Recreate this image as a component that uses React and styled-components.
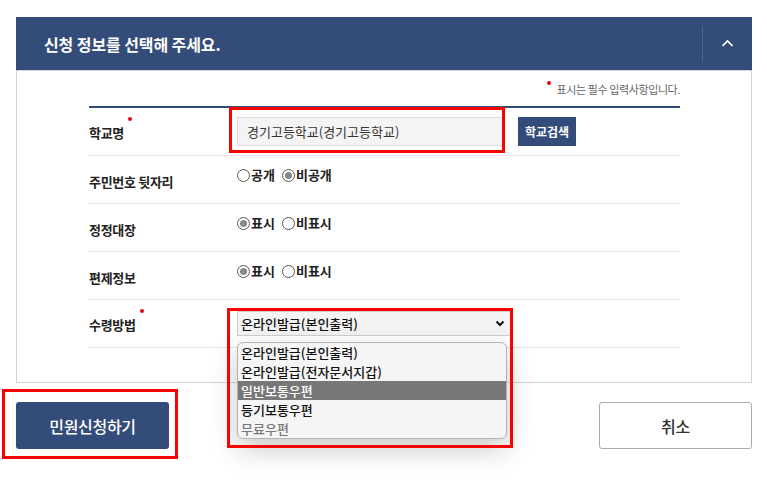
import React from 'react'
import styled, { createGlobalStyle } from 'styled-components'

const navy = '#344c7a'

const GlobalStyle = createGlobalStyle`
  body {
    margin: 0;
    background: #fff;
    font-family: "Noto Sans CJK KR", "Noto Sans", sans-serif;
    color: #222;
  }
`

const Page = styled.div`
  width: 736px;
  min-height: 469px;
  padding: 17px 0 0 16px;
`

const Header = styled.div`
  height: 53px;
  background: ${navy};
  display: flex;
  align-items: center;
  justify-content: space-between;
`

const Title = styled.h2`
  margin: 0 0 0 28px;
  font-size: 16px;
  font-weight: 700;
  color: #fff;
  letter-spacing: -0.1px;
`

const Toggle = styled.div`
  width: 49px;
  height: 36px;
  border-left: 1px solid rgba(255, 255, 255, 0.14);
  display: flex;
  align-items: center;
  justify-content: center;
`

const Panel = styled.div`
  border: 1px solid #d2d2d2;
  padding: 10px 71px 34px 72px;
`

const Note = styled.p`
  margin: 0 0 9px;
  text-align: right;
  font-size: 11px;
  line-height: 16px;
  color: #666;
  letter-spacing: -0.4px;

  &::before {
    content: '';
    display: inline-block;
    width: 4px;
    height: 4px;
    border-radius: 50%;
    background: #e60012;
    margin-right: 6px;
    vertical-align: 9px;
  }
`

const Table = styled.div`
  border-top: 2px solid ${navy};
`

const Row = styled.div`
  display: flex;
  height: 47px;
  border-bottom: 1px solid #e4e4e4;
`

const Label = styled.div`
  width: 148px;
  flex: none;
  padding-top: ${p => p.$top || 17}px;
  font-size: 13px;
  line-height: 18px;
  font-weight: 700;
  color: #222;
  letter-spacing: -0.3px;

  span {
    position: relative;
  }
  ${p => p.$required && `
    span::after {
      content: '';
      position: absolute;
      right: -8px;
      top: -6px;
      width: 4px;
      height: 4px;
      border-radius: 50%;
      background: #e60012;
    }
  `}
`

const Field = styled.div`
  position: relative;
  display: flex;
  align-items: flex-start;
  padding-top: ${p => p.$top || 10}px;
  gap: 13px;
`

const TextInput = styled.div`
  width: 257px;
  height: 27px;
  padding-left: 9px;
  background: #f4f4f4;
  border: 1px solid #dcdcdc;
  font-size: 13px;
  line-height: 27px;
  color: #333;
`

const SmallButton = styled.button`
  width: 58px;
  height: 29px;
  border: none;
  background: ${navy};
  color: #fff;
  font-family: inherit;
  font-size: 12px;
  font-weight: 700;
  padding: 0;
`

const RadioGroup = styled.div`
  display: flex;
  gap: 7px;
  font-size: 13px;
  line-height: 18px;
  font-weight: 700;
  color: #222;
`

const RadioItem = styled.label`
  display: flex;
  align-items: center;
  gap: 1px;
`

const Dot = styled.span`
  width: 11px;
  height: 11px;
  border-radius: 50%;
  border: 1px solid #555;
  display: flex;
  align-items: center;
  justify-content: center;
  background: #fff;

  &::after {
    content: '';
    width: 7px;
    height: 7px;
    border-radius: 50%;
    background: ${p => (p.$checked ? '#888' : 'transparent')};
  }
`

const SelectBox = styled.div`
  width: 264px;
  height: 23px;
  padding: 0 6px 0 3px;
  background: #f3f3f3;
  border: 1px solid #cfcfcf;
  display: flex;
  align-items: center;
  justify-content: space-between;
  font-size: 13px;
  font-weight: 500;
  color: #111;
`

const OptionList = styled.ul`
  position: absolute;
  top: 42px;
  left: 0;
  width: 268px;
  margin: 0;
  padding: 0;
  list-style: none;
  background: #f5f5f5;
  border: 1px solid #b4b4b4;
  border-radius: 6px;
  overflow: hidden;
  box-shadow: 0 10px 28px rgba(0, 0, 0, 0.22);
  z-index: 2;
`

const Option = styled.li`
  height: 19px;
  line-height: 19px;
  padding: 0 3px;
  font-size: 13px;
  font-weight: 500;
  color: ${p => (p.$active ? '#fff' : p.$disabled ? '#777' : '#111')};
  background: ${p => (p.$active ? '#777' : 'transparent')};
`

const Highlight = styled.div`
  position: absolute;
  border: 3px solid #ff0000;
  pointer-events: none;
  z-index: 3;
`

const Footer = styled.div`
  margin-top: 19px;
  display: flex;
  justify-content: space-between;
`

const ButtonSlot = styled.div`
  position: relative;
`

const ActionButton = styled.button`
  display: block;
  width: 153px;
  height: 47px;
  border-radius: 3px;
  font-family: inherit;
  font-size: 16px;
  font-weight: 500;
  letter-spacing: -0.3px;
  background: ${p => (p.$primary ? navy : '#fff')};
  color: ${p => (p.$primary ? '#fff' : '#333')};
  border: ${p => (p.$primary ? 'none' : '1px solid #a9a9a9')};
`

const ChevronUp = () => (
  <svg width="13" height="9" viewBox="0 0 13 9">
    <path d="M1.5 7 L6.5 2 L11.5 7" fill="none" stroke="#fff" strokeWidth="1.7" />
  </svg>
)

const ChevronDown = () => (
  <svg width="10" height="7" viewBox="0 0 10 7">
    <path d="M1.5 1.5 L5 5 L8.5 1.5" fill="none" stroke="#111" strokeWidth="2" />
  </svg>
)

const Radio = ({ options, value }) => (
  <RadioGroup>
    {options.map(o => (
      <RadioItem key={o}>
        <Dot $checked={o === value} />
        {o}
      </RadioItem>
    ))}
  </RadioGroup>
)

const deliveryOptions = [
  { label: '온라인발급(본인출력)' },
  { label: '온라인발급(전자문서지갑)' },
  { label: '일반보통우편', active: true },
  { label: '등기보통우편' },
  { label: '무료우편', disabled: true }
]

export default function App() {
  return (
    <Page>
      <GlobalStyle />
      <Header>
        <Title>신청 정보를 선택해 주세요.</Title>
        <Toggle>
          <ChevronUp />
        </Toggle>
      </Header>
      <Panel>
        <Note>표시는 필수 입력사항입니다.</Note>
        <Table>
          <Row>
            <Label $required $top={16}><span>학교명</span></Label>
            <Field $top={9}>
              <TextInput>경기고등학교(경기고등학교)</TextInput>
              <SmallButton>학교검색</SmallButton>
              <Highlight style={{ left: -8, top: -1, width: 270, height: 40 }} />
            </Field>
          </Row>
          <Row>
            <Label><span>주민번호 뒷자리</span></Label>
            <Field>
              <Radio options={['공개', '비공개']} value="비공개" />
            </Field>
          </Row>
          <Row>
            <Label><span>정정대장</span></Label>
            <Field>
              <Radio options={['표시', '비표시']} value="표시" />
            </Field>
          </Row>
          <Row>
            <Label><span>편제정보</span></Label>
            <Field>
              <Radio options={['표시', '비표시']} value="표시" />
            </Field>
          </Row>
          <Row>
            <Label $required $top={16}><span>수령방법</span></Label>
            <Field $top={11}>
              <SelectBox>
                온라인발급(본인출력)
                <ChevronDown />
              </SelectBox>
              <OptionList>
                {deliveryOptions.map(o => (
                  <Option key={o.label} $active={o.active} $disabled={o.disabled}>
                    {o.label}
                  </Option>
                ))}
              </OptionList>
              <Highlight style={{ left: -10, top: 8, width: 280, height: 134 }} />
            </Field>
          </Row>
        </Table>
      </Panel>
      <Footer>
        <ButtonSlot>
          <ActionButton $primary>민원신청하기</ActionButton>
          <Highlight style={{ left: -14, top: -13, width: 170, height: 64 }} />
        </ButtonSlot>
        <ButtonSlot>
          <ActionButton>취소</ActionButton>
        </ButtonSlot>
      </Footer>
    </Page>
  )
}
